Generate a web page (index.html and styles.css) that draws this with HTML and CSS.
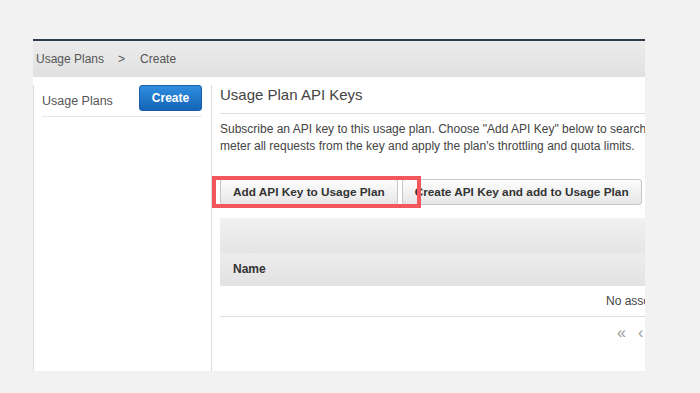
FILE: index.html
```html
<!DOCTYPE html>
<html lang="en">
<head>
    <meta charset="UTF-8">
    <meta name="viewport" content="width=device-width, initial-scale=1.0">
    <title>Usage Plans - Create</title>
    <link rel="stylesheet" href="styles.css">
</head>

<body>
    <div class="console">
        <div class="breadcrumb">
            <span>Usage Plans</span>
            <span class="sep">&gt;</span>
            <span>Create</span>
        </div>

        <div class="layout">
            <div class="sidebar">
                <div class="sidebar-head">
                    <span class="sidebar-title">Usage Plans</span>
                    <button class="btn-primary">Create</button>
                </div>
            </div>

            <div class="main">
                <h2>Usage Plan API Keys</h2>
                <p class="desc">
                    <span>Subscribe an API key to this usage plan. Choose "Add API Key" below to search for an existing key. API Gateway will</span>
                    <span>meter all requests from the key and apply the plan's throttling and quota limits.</span>
                </p>

                <div class="actions">
                    <button class="btn">Add API Key to Usage Plan</button>
                    <button class="btn">Create API Key and add to Usage Plan</button>
                    <!-- annotation around the first button -->
                    <div class="highlight"></div>
                </div>

                <div class="table">
                    <div class="table-top"></div>
                    <div class="table-head">Name</div>
                    <div class="table-empty">No associated API keys</div>
                </div>

                <div class="pager">
                    <span>&laquo;</span>
                    <span>&lsaquo;</span>
                </div>
            </div>
        </div>
    </div>
</body>
</html>
```

FILE: styles.css
```css
body {
    font-family: 'Liberation Sans', Arial, sans-serif;
    background: #f2f2f2;
    color: #444;
    margin: 0;
    padding: 39px 0 0 33px;
}

.console {
    width: 612px;
    height: 330px;
    background: #fff;
    border-top: 2px solid #313c4a;
    overflow: hidden;
    display: flex;
    flex-direction: column;
}

.breadcrumb {
    height: 36px;
    flex: none;
    display: flex;
    align-items: center;
    padding-left: 3px;
    font-size: 12px;
    color: #555;
    background: linear-gradient(#ececec, #e0e0e0);
}

.breadcrumb .sep {
    margin: 0 15px 0 14px;
}

.layout {
    flex: 1;
    display: flex;
    padding-top: 8px;
}

.sidebar {
    width: 160px;
    flex: none;
    padding: 0 9px 0 8px;
    border-left: 1px solid #dcdcdc;
    border-right: 1px solid #dcdcdc;
}

.sidebar-head {
    display: flex;
    align-items: center;
    justify-content: space-between;
    height: 26px;
    padding-bottom: 5px;
    border-bottom: 1px solid #e6e6e6;
}

.sidebar-title {
    font-size: 12.5px;
    color: #555;
    padding-top: 6px;
}

.btn-primary {
    width: 63px;
    height: 26px;
    font-family: inherit;
    font-size: 12px;
    font-weight: bold;
    color: #fff;
    background: linear-gradient(#2f8ee0, #1463b6);
    border: 1px solid #1a5da6;
    border-radius: 3px;
    padding: 0;
}

.main {
    width: 640px;
    flex: none;
    padding-left: 8px;
}

.main h2 {
    margin: 0;
    font-size: 15px;
    font-weight: normal;
    line-height: 20px;
    color: #444;
    padding-bottom: 8px;
    border-bottom: 1px solid #dedede;
}

.desc {
    margin: 7px 0 0;
    font-size: 12px;
    line-height: 17px;
    color: #444;
}

.desc span {
    display: block;
    white-space: nowrap;
}

.actions {
    position: relative;
    display: flex;
    gap: 4px;
    margin-top: 24px;
}

.btn {
    height: 26px;
    padding: 0 12px;
    font-family: inherit;
    font-size: 11.8px;
    font-weight: bold;
    color: #333;
    background: linear-gradient(#fdfdfd, #e6e6e6);
    border: 1px solid #c6c6c6;
    border-radius: 3px;
}

.highlight {
    position: absolute;
    left: -8px;
    top: -3px;
    width: 201px;
    height: 24px;
    border: 4px solid #f4565b;
}

.table {
    margin-top: 13px;
}

.table-top {
    height: 35px;
    background: linear-gradient(#f1f1f1, #e5e5e5);
}

.table-head {
    height: 33px;
    line-height: 33px;
    padding-left: 13px;
    font-size: 12px;
    font-weight: bold;
    color: #333;
    background: linear-gradient(#ececec, #e2e2e2);
}

.table-empty {
    height: 30px;
    line-height: 30px;
    padding-left: 386px;
    font-size: 12px;
    color: #444;
    border-bottom: 1px solid #dddddd;
    white-space: nowrap;
}

.pager {
    display: flex;
    gap: 12px;
    margin-top: 6px;
    padding-left: 397px;
    height: 20px;
    line-height: 20px;
    font-size: 16px;
    color: #999;
}
```
